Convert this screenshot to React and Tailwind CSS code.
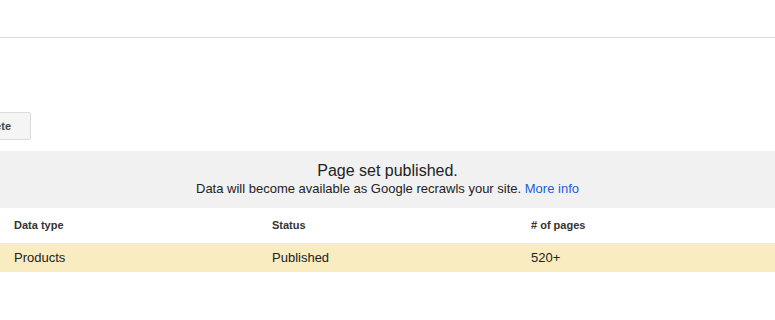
import React from "react";

const rows = [{ type: "Products", status: "Published", pages: "520+" }];

const App = () => {
  return (
    <div className="w-[775px] h-[320px] overflow-hidden bg-white text-[#222] font-['Liberation_Sans',Arial,sans-serif]">
      {/* Top bar */}
      <div className="h-[38px] border-b border-[#d9d9d9]"></div>

      {/* Toolbar */}
      <div className="pt-[74px] h-[113px]">
        <button className="ml-[-42px] h-[28px] px-[19px] border border-[#dcdcdc] rounded-[2px] bg-[#f5f5f5] text-[11px] font-bold text-[#444]">
          Delete
        </button>
      </div>

      {/* Notice */}
      <div className="h-[57px] bg-[#f1f1f1] flex flex-col items-center pt-[10px]">
        <p className="text-[16px] leading-[19px]">Page set published.</p>
        <p className="text-[13px] leading-[16px] mt-[1px]">
          Data will become available as Google recrawls your site.{" "}
          <a className="text-[#1a5fd6]">More info</a>
        </p>
      </div>

      {/* Table */}
      <table className="w-full border-collapse">
        <thead>
          <tr className="h-[35px]">
            <th className="w-[258px] pl-[14px] text-left text-[11px] font-bold text-[#333]">Data type</th>
            <th className="w-[259px] pl-[14px] text-left text-[11px] font-bold text-[#333]">Status</th>
            <th className="pl-[14px] text-left text-[11px] font-bold text-[#333]">&#35; of pages</th>
          </tr>
        </thead>
        <tbody>
          {rows.map((row) => (
            <tr key={row.type} className="h-[29px] bg-[#f9ecc0] text-[13px]">
              <td className="pl-[14px]">{row.type}</td>
              <td className="pl-[14px]">{row.status}</td>
              <td className="pl-[14px]">{row.pages}</td>
            </tr>
          ))}
        </tbody>
      </table>
    </div>
  );
};

export default App;
